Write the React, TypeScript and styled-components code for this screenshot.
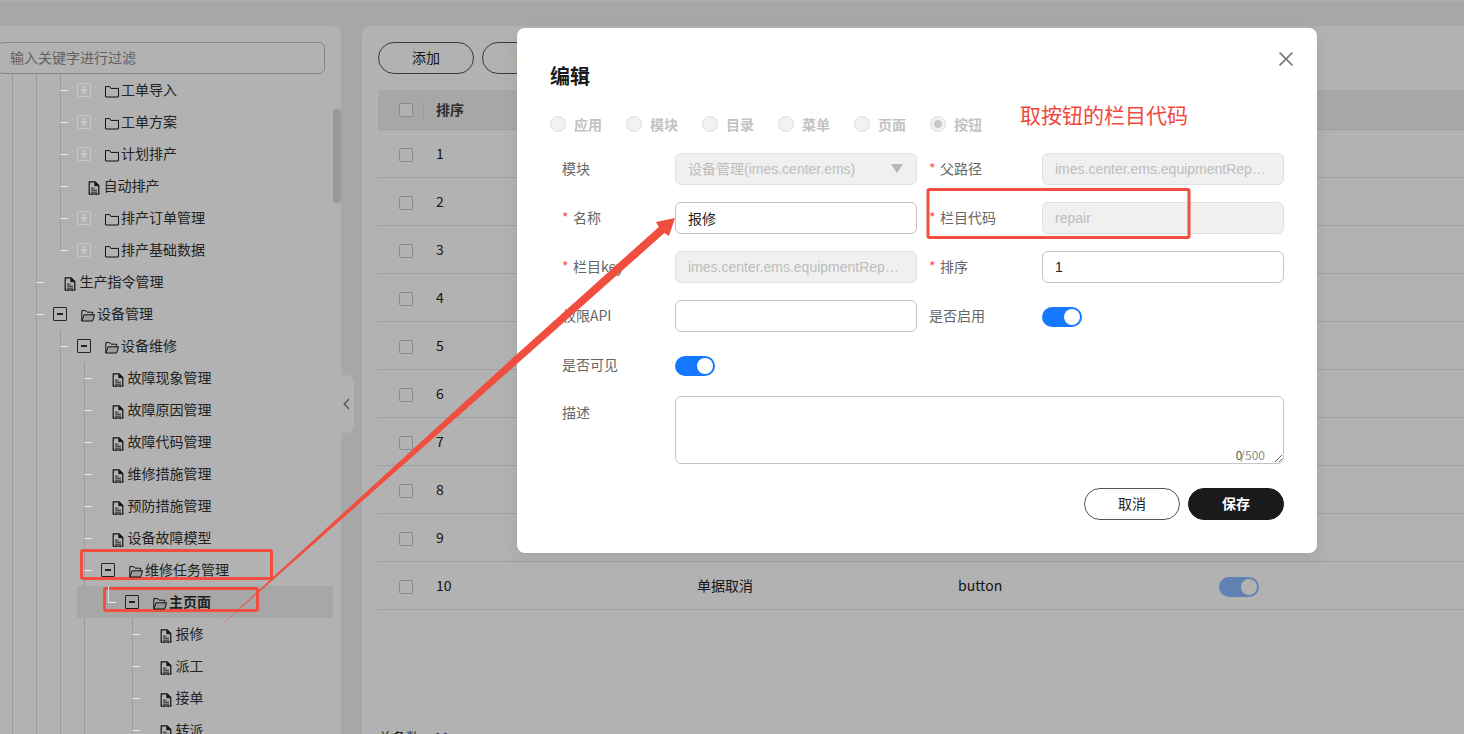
import React from 'react';
import styled, { createGlobalStyle } from 'styled-components';

const GlobalStyle = createGlobalStyle`
  html, body {
    margin: 0;
    padding: 0;
    height: 100%;
    overflow: hidden;
    font-family: "Noto Sans CJK SC", "Noto Sans", sans-serif;
    font-size: 14px;
    color: #333;
  }
  * {
    box-sizing: border-box;
  }
`;

const Page = styled.div`
  position: relative;
  width: 1464px;
  height: 734px;
  overflow: hidden;
  background: #f0f0f0;
`;

const TopBar = styled.div`
  height: 2px;
  background: #fafafa;
`;

const Workspace = styled.div`
  display: flex;
  gap: 21px;
  height: 732px;
  padding-top: 24px;
`;

/* left tree */
const Side = styled.aside`
  position: relative;
  flex: none;
  width: 341px;
  height: 708px;
  background: #fff;
  border-radius: 0 8px 0 0;
  padding-top: 16px;
  display: flex;
  flex-direction: column;
`;

const FilterInput = styled.input`
  flex: none;
  width: 328px;
  height: 32px;
  margin-left: -3px;
  padding: 0 12px 2px;
  border: 1px solid #bfbfbf;
  border-radius: 6px;
  background: #fff;
  font: inherit;
  outline: none;

  &::placeholder {
    color: #8c8c8c;
  }
`;

const Tree = styled.div`
  flex: 1;
  width: 333px;
  padding-left: 12px;
  overflow: hidden;
`;

const Node = styled.div<{ $last?: boolean; $selected?: boolean }>`
  position: relative;

  &::before {
    content: '';
    position: absolute;
    left: 0;
    top: 0;
    width: 1px;
    background: #dedede;
    z-index: ${({ $selected }) => ($selected ? 1 : 'auto')};
    ${({ $last }) => ($last ? 'height: 16px;' : 'bottom: 0;')}
  }
`;

const Branch = styled.div`
  margin-left: 24px;
`;

const Row = styled.div<{ $leaf?: boolean; $selected?: boolean }>`
  position: relative;
  display: flex;
  align-items: center;
  height: 32px;
  padding-left: ${({ $leaf }) => ($leaf ? 28 : 17)}px;
  font-weight: ${({ $selected }) => ($selected ? 700 : 400)};

  &::before {
    content: '';
    display: ${({ $selected }) => ($selected ? 'block' : 'none')};
    position: absolute;
    left: -31px;
    right: 0;
    top: 0;
    bottom: 0;
    background: #f0f0f0;
  }

  &::after {
    content: '';
    position: absolute;
    left: 0;
    top: 16px;
    width: 8px;
    height: 1px;
    background: #ececec;
    z-index: 1;
  }
`;

const Toggle = styled.span<{ $open?: boolean }>`
  position: relative;
  z-index: 1;
  flex: none;
  width: 14px;
  height: 14px;
  margin-right: 14px;
  border: 1px solid ${({ $open }) => ($open ? '#222' : '#c8c8c8')};
  border-radius: 1px;

  &::before {
    content: '';
    position: absolute;
    left: 3px;
    right: 3px;
    top: 5px;
    height: 2px;
    background: ${({ $open }) => ($open ? '#222' : '#c8c8c8')};
  }

  &::after {
    content: '';
    display: ${({ $open }) => ($open ? 'none' : 'block')};
    position: absolute;
    top: 2px;
    bottom: 2px;
    left: 5px;
    width: 2px;
    background: #c8c8c8;
  }
`;

const NodeLabel = styled.span`
  position: relative;
  z-index: 1;
  margin-top: -2px;
  white-space: nowrap;
  color: #222;
  line-height: 20px;
`;

const NodeIcon = styled.svg<{ $leaf?: boolean }>`
  position: relative;
  z-index: 1;
  flex: none;
  width: ${({ $leaf }) => ($leaf ? 12 : 14)}px;
  height: 14px;
  margin-top: ${({ $leaf }) => ($leaf ? 3 : 1)}px;
  margin-right: ${({ $leaf }) => ($leaf ? 3.5 : 2)}px;
`;

const ScrollThumb = styled.div`
  position: absolute;
  right: 0;
  top: 83px;
  width: 8px;
  height: 94px;
  border-radius: 4px;
  background: #dcdcdc;
`;

const CollapseHandle = styled.div`
  position: absolute;
  left: 341px;
  top: 349px;
  width: 13px;
  height: 58px;
  border-radius: 0 8px 8px 0;
  background: #fff;
  display: flex;
  align-items: center;
  justify-content: flex-start;
  padding-left: 2px;
`;

/* right table */
const Main = styled.main`
  flex: 1;
  min-width: 0;
  height: 708px;
  background: #fff;
  border-radius: 8px 0 0 0;
  padding: 16px 0 0 16px;
`;

const Toolbar = styled.div`
  display: flex;
  gap: 8px;
  margin-bottom: 16px;
`;

const PillButton = styled.button<{ $dark?: boolean; $danger?: boolean }>`
  width: 96px;
  height: 32px;
  padding: 0 0 2px;
  border-radius: 16px;
  border: 1px solid ${({ $dark }) => ($dark ? '#1a1a1a' : '#555')};
  background: ${({ $dark }) => ($dark ? '#1a1a1a' : '#fff')};
  color: ${({ $dark, $danger }) => ($dark ? '#fff' : $danger ? '#e8871e' : '#222')};
  font: inherit;
  font-weight: ${({ $dark }) => ($dark ? 700 : 400)};
`;

const TableRow = styled.div<{ $head?: boolean }>`
  display: grid;
  grid-template-columns: 46px 261px 261px 261px 1fr;
  align-items: center;
  height: ${({ $head }) => ($head ? 40 : 48)}px;
  background: ${({ $head }) => ($head ? '#f0f0f0' : '#fff')};
  border-bottom: 1px solid #e4e4e4;
`;

const CheckCell = styled.div<{ $head?: boolean }>`
  height: 16px;
  margin-top: ${({ $head }) => ($head ? 0 : 3)}px;
  display: flex;
  align-items: center;
  padding-left: 21px;
  border-right: ${({ $head }) => ($head ? '1px solid #dcdcdc' : '0')};
`;

const Check = styled.input.attrs({ type: 'checkbox' })`
  appearance: none;
  width: 14px;
  height: 14px;
  margin: 0;
  border: 1px solid #c8c8c8;
  border-radius: 2px;
  background: #fff;
`;

const Cell = styled.div<{ $head?: boolean }>`
  padding: 0 0 2px 12px;
  color: ${({ $head }) => ($head ? '#444' : '#222')};
  font-weight: ${({ $head }) => ($head ? 700 : 400)};
`;

const SwitchCell = styled.div`
  padding-left: 12px;
  margin-top: 3px;
`;

const Total = styled.div`
  margin: 117px 0 0;
  line-height: 20px;
  display: flex;
  gap: 14px;
`;

const Switch = styled.span<{ $faded?: boolean }>`
  display: flex;
  justify-content: flex-end;
  align-items: center;
  flex: none;
  width: 40px;
  height: 20px;
  padding-right: 2px;
  border-radius: 10px;
  background: #1677ff;
  opacity: ${({ $faded }) => ($faded ? 0.5 : 1)};

  &::after {
    content: '';
    width: 16px;
    height: 16px;
    border-radius: 50%;
    background: #fff;
  }
`;

/* dialog */
const Mask = styled.div`
  position: absolute;
  inset: 0;
  background: rgba(0, 0, 0, 0.3);
`;

const Dialog = styled.div`
  position: absolute;
  left: 517px;
  top: 28px;
  width: 800px;
  height: 525px;
  background: #fff;
  border-radius: 8px;
  box-shadow: 0 6px 16px rgba(0, 0, 0, 0.08);
  padding: 34px 33px 0 33px;
`;

const Title = styled.h2`
  margin: 0 0 26px;
  font-size: 20px;
  line-height: 28px;
  font-weight: 700;
  color: #1a1a1a;
`;

const CloseIcon = styled.svg`
  position: absolute;
  right: 24px;
  top: 24px;
  width: 14px;
  height: 14px;
`;

const RadioRow = styled.div`
  display: flex;
  gap: 24px;
  height: 16px;
  margin-bottom: 21px;
`;

const RadioItem = styled.label`
  display: flex;
  align-items: center;
  gap: 8px;
  color: #c2c2c2;
  font-weight: 700;
  line-height: 16px;
`;

const RadioDot = styled.span<{ $checked?: boolean }>`
  display: flex;
  align-items: center;
  justify-content: center;
  width: 16px;
  height: 16px;
  border-radius: 50%;
  border: 1px solid #dcdcdc;
  background: #f2f2f2;

  &::after {
    content: '';
    display: ${({ $checked }) => ($checked ? 'block' : 'none')};
    width: 8px;
    height: 8px;
    border-radius: 50%;
    background: #c8c8c8;
  }
`;

const FormGrid = styled.div`
  display: grid;
  grid-template-columns: 355px 355px;
  column-gap: 12px;
  row-gap: 17px;
  margin-left: 12px;
`;

const FormItem = styled.div<{ $wide?: boolean; $short?: boolean }>`
  display: flex;
  align-items: flex-start;
  grid-column: ${({ $wide }) => ($wide ? '1 / span 2' : 'auto')};
  height: ${({ $short }) => ($short ? '30px' : 'auto')};
`;

const FieldLabel = styled.label<{ $area?: boolean }>`
  flex: none;
  display: flex;
  width: 113px;
  line-height: ${({ $area }) => ($area ? 32 : 30)}px;
  color: #666;
`;

const Star = styled.span`
  width: 11px;
  color: #ff4d4f;
`;

const TextField = styled.input`
  flex: 1;
  min-width: 0;
  height: 32px;
  padding: 0 12px;
  border: 1px solid #c4c4c4;
  border-radius: 6px;
  background: #fff;
  color: #222;
  font-family: "Liberation Sans", "Noto Sans CJK SC", sans-serif;
  font-size: 14px;
  outline: none;
  text-overflow: ellipsis;

  &:disabled {
    border-color: #e0e0e0;
    background: #f0f0f0;
    color: #bdbdbd;
    opacity: 1;
  }
`;

const SelectBox = styled.div`
  flex: 1;
  display: flex;
  align-items: center;
  justify-content: space-between;
  height: 32px;
  padding: 0 13px 2px 12px;
  border: 1px solid #e0e0e0;
  border-radius: 6px;
  background: #f0f0f0;
  color: #bdbdbd;
  font-family: "Liberation Sans", "Noto Sans CJK SC", sans-serif;

  &::after {
    content: '';
    width: 0;
    height: 0;
    border-left: 6.5px solid transparent;
    border-right: 6.5px solid transparent;
    border-top: 9px solid #b8b8b8;
  }
`;

const SwitchSlot = styled.div`
  padding-top: 7px;
`;

const AreaWrap = styled.div`
  position: relative;
  flex: 1;
  height: 68px;
`;

const TextArea = styled.textarea`
  display: block;
  width: 100%;
  height: 68px;
  padding: 6px 12px;
  border: 1px solid #c4c4c4;
  border-radius: 6px;
  font: inherit;
  outline: none;
`;

const Counter = styled.span`
  position: absolute;
  right: 19px;
  bottom: 1px;
  display: flex;
  font-size: 12px;
  line-height: 16px;
  color: #8c8c8c;
`;

const CounterNow = styled.span`
  margin-right: -2px;
  color: #555;
`;

const DialogFooter = styled.div`
  display: flex;
  justify-content: flex-end;
  gap: 8px;
  margin-top: 24px;
`;

/* screenshot annotations */
const Markup = styled.svg`
  position: absolute;
  inset: 0;
  width: 1464px;
  height: 734px;
  pointer-events: none;
`;

const Note = styled.div`
  position: absolute;
  left: 1020px;
  top: 99px;
  font-size: 21px;
  line-height: 30px;
  color: #f04a3e;
  white-space: nowrap;
`;

type TreeItem = {
  label?: string;
  kind?: 'doc' | 'open' | 'closed';
  selected?: boolean;
  continues?: boolean;
  children?: TreeItem[];
};

const doc = (label: string): TreeItem => ({ label, kind: 'doc' });
const closed = (label: string): TreeItem => ({ label, kind: 'closed' });

const treeData: TreeItem[] = [
  {
    continues: true,
    children: [
      {
        children: [
          closed('工单导入'),
          closed('工单方案'),
          closed('计划排产'),
          doc('自动排产'),
          closed('排产订单管理'),
          closed('排产基础数据'),
        ],
      },
      doc('生产指令管理'),
      {
        label: '设备管理',
        kind: 'open',
        continues: true,
        children: [
          {
            label: '设备维修',
            kind: 'open',
            continues: true,
            children: [
              doc('故障现象管理'),
              doc('故障原因管理'),
              doc('故障代码管理'),
              doc('维修措施管理'),
              doc('预防措施管理'),
              doc('设备故障模型'),
              {
                label: '维修任务管理',
                kind: 'open',
                children: [
                  {
                    label: '主页面',
                    kind: 'open',
                    selected: true,
                    continues: true,
                    children: [doc('报修'), doc('派工'), doc('接单'), doc('转派')],
                  },
                ],
              },
            ],
          },
        ],
      },
    ],
  },
];

const FolderGlyph = ({ open }: { open: boolean }) => (
  <NodeIcon viewBox="0 0 14 14" fill="none" stroke="#111" strokeWidth="1">
    {open ? (
      <>
        <path d="M.8 13V2.6h4.1l1.2 1.6h5.6v2.4" />
        <path d="M.8 13 3 6.8h10.6L11.6 13z" fill="#777" fillOpacity="0.35" />
      </>
    ) : (
      <path d="M.5 13V2.6h4.2l1.1 1.8h7.7V13z" />
    )}
  </NodeIcon>
);

const DocGlyph = () => (
  <NodeIcon $leaf viewBox="0 0 12 14" fill="none" stroke="#111" strokeWidth="1.2">
    <path d="M1.2.8h5.9l3.7 3.8v8.6H1.2z" />
    <path d="M6.8 1v3.8h4" fill="#111" strokeWidth="0.8" />
    <path d="M3 7.2h3.4M3 9.2h6M3 11.2h6" strokeWidth="0.9" />
  </NodeIcon>
);

const TreeNode = ({ item, last }: { item: TreeItem; last: boolean }) => (
  <Node $last={last} $selected={item.selected}>
    {item.label && (
      <Row $leaf={item.kind === 'doc'} $selected={item.selected}>
        {item.kind !== 'doc' && <Toggle $open={item.kind === 'open'} />}
        {item.kind === 'doc' ? <DocGlyph /> : <FolderGlyph open={item.kind === 'open'} />}
        <NodeLabel>{item.label}</NodeLabel>
      </Row>
    )}
    {item.children && (
      <Branch>
        {item.children.map((child, i) => (
          <TreeNode
            key={i}
            item={child}
            last={i === item.children!.length - 1 && !item.continues}
          />
        ))}
      </Branch>
    )}
  </Node>
);

const radios = ['应用', '模块', '目录', '菜单', '页面', '按钮'];
const rowNumbers = [1, 2, 3, 4, 5, 6, 7, 8, 9, 10];

export default function App() {
  return (
    <Page>
      <GlobalStyle />
      <TopBar />
      <Workspace>
        <Side>
          <FilterInput placeholder="输入关键字进行过滤" />
          <Tree>
            {treeData.map((item, i) => (
              <TreeNode key={i} item={item} last={false} />
            ))}
          </Tree>
          <ScrollThumb />
          <CollapseHandle>
            <svg width="7" height="12" viewBox="0 0 7 12" fill="none" stroke="#777" strokeWidth="1.3">
              <path d="M6 1 1.2 6 6 11" />
            </svg>
          </CollapseHandle>
        </Side>
        <Main>
          <Toolbar>
            <PillButton>添加</PillButton>
            <PillButton $danger>删除</PillButton>
          </Toolbar>
          <TableRow $head>
            <CheckCell $head>
              <Check />
            </CheckCell>
            <Cell $head>排序</Cell>
          </TableRow>
          {rowNumbers.map(n => (
            <TableRow key={n}>
              <CheckCell>
                <Check />
              </CheckCell>
              <Cell>{n}</Cell>
              <Cell>{n === 10 ? '单据取消' : ''}</Cell>
              <Cell>{n === 10 ? 'button' : ''}</Cell>
              <SwitchCell>
                <Switch $faded />
              </SwitchCell>
            </TableRow>
          ))}
          <Total>
            <span>总条数</span>
            <span>11</span>
          </Total>
        </Main>
      </Workspace>

      <Mask />

      <Dialog>
        <Title>编辑</Title>
        <CloseIcon viewBox="0 0 14 14" stroke="#777" strokeWidth="1.6">
          <path d="M.6.6l12.8 12.8M13.4.6.6 13.4" />
        </CloseIcon>
        <RadioRow>
          {radios.map(r => (
            <RadioItem key={r}>
              <RadioDot $checked={r === '按钮'} />
              {r}
            </RadioItem>
          ))}
        </RadioRow>
        <FormGrid>
          <FormItem>
            <FieldLabel>模块</FieldLabel>
            <SelectBox>设备管理(imes.center.ems)</SelectBox>
          </FormItem>
          <FormItem>
            <FieldLabel>
              <Star>*</Star>父路径
            </FieldLabel>
            <TextField disabled value="imes.center.ems.equipmentRepair.main" readOnly />
          </FormItem>
          <FormItem>
            <FieldLabel>
              <Star>*</Star>名称
            </FieldLabel>
            <TextField value="报修" readOnly />
          </FormItem>
          <FormItem>
            <FieldLabel>
              <Star>*</Star>栏目代码
            </FieldLabel>
            <TextField disabled value="repair" readOnly />
          </FormItem>
          <FormItem>
            <FieldLabel>
              <Star>*</Star>栏目key
            </FieldLabel>
            <TextField disabled value="imes.center.ems.equipmentRepair.main.repair" readOnly />
          </FormItem>
          <FormItem>
            <FieldLabel>
              <Star>*</Star>排序
            </FieldLabel>
            <TextField value="1" readOnly />
          </FormItem>
          <FormItem>
            <FieldLabel>权限API</FieldLabel>
            <TextField readOnly />
          </FormItem>
          <FormItem>
            <FieldLabel>是否启用</FieldLabel>
            <SwitchSlot>
              <Switch />
            </SwitchSlot>
          </FormItem>
          <FormItem $short>
            <FieldLabel>是否可见</FieldLabel>
            <SwitchSlot>
              <Switch />
            </SwitchSlot>
          </FormItem>
          <div />
          <FormItem $wide>
            <FieldLabel $area>描述</FieldLabel>
            <AreaWrap>
              <TextArea />
              <Counter>
                <CounterNow>0</CounterNow>/500
              </Counter>
            </AreaWrap>
          </FormItem>
        </FormGrid>
        <DialogFooter>
          <PillButton>取消</PillButton>
          <PillButton $dark>保存</PillButton>
        </DialogFooter>
      </Dialog>

      <Markup viewBox="0 0 1464 734" fill="none" stroke="#f04e3e" strokeWidth="3">
        <rect x="81.5" y="550.5" width="190" height="28" rx="1.5" />
        <rect x="104.5" y="588.5" width="153" height="22" rx="1.5" />
        <rect x="928" y="189.5" width="261" height="48" rx="1.5" />
        <path
          d="M218 628 271.3 578.8 398.4 462.6 514.6 356.3 658.8 226.9 656 222 675 218 669 236 664.4 233.1 519.4 361.7 401.6 466.2 272.7 580.2z"
          fill="#f04e3e"
          stroke="none"
        />
      </Markup>
      <Note>取按钮的栏目代码</Note>
    </Page>
  );
}
